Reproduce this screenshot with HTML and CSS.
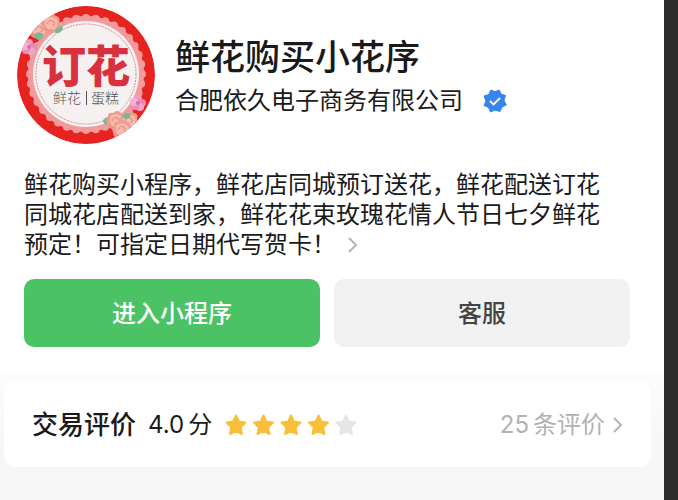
FILE: index.html
```html
<!DOCTYPE html>
<html lang="zh-CN">
<head>
    <meta charset="UTF-8">
    <meta name="viewport" content="width=device-width, initial-scale=1.0">
    <title>鲜花购买小花序</title>
    <link rel="stylesheet" href="styles.css">
</head>
<body>
    <main class="page">
        <section class="profile">
            <header class="header">
                <svg class="logo" viewBox="0 0 138 138" role="img" aria-label="订花 鲜花蛋糕">
                    <defs>
                        <clipPath id="logo-clip"><circle cx="69" cy="69" r="69"/></clipPath>
                        <g id="rose">
                            <path d="M-8-3Q-9-9-3-8Q1-12 5-8Q10-7 8-2Q11 3 7 6Q3 11-2 8Q-9 8-9 2Q-11-1-8-3Z" fill="#ef9d92"/>
                            <path d="M-6-4Q-2-9 3-6Q8-4 6 1Q5 7-1 6Q-7 5-6-4Z" fill="#f6b9ab"/>
                            <path d="M-4 0Q-2-5 2-3Q5-1 2 2M-7 4Q-3 8 2 6" fill="none" stroke="#e3837c" stroke-width="1"/>
                        </g>
                        <g id="blossom">
                            <circle cx="0" cy="-4" r="4" fill="#ee9cc5"/>
                            <circle cx="4" cy="0" r="4" fill="#ea86b8"/>
                            <circle cx="2" cy="4" r="4" fill="#f0a5ca"/>
                            <circle cx="-3" cy="3" r="4" fill="#e88fc0"/>
                            <circle cx="-4" cy="-1" r="4" fill="#f2b2d2"/>
                            <circle r="2" fill="#dc6ca6"/>
                        </g>
                    </defs>
                    <g clip-path="url(#logo-clip)">
                        <circle cx="69" cy="69" r="69" fill="#e6231f"/>
                        <circle cx="69" cy="68" r="58" fill="#f29a9c"/>
                        <circle class="scallops" cx="69" cy="68" r="56" pathLength="360"/>
                        <circle cx="69" cy="68" r="53" fill="#f4f1f0"/>
                        <circle class="stitches" cx="69" cy="68" r="50"/>
                        <use href="#rose" x="22" y="24"/>
                        <use href="#rose" x="34" y="18"/>
                        <use href="#blossom" x="12" y="41"/>
                        <path d="M17 29Q21 24 26 28Q26 34 21 34Q18 33 17 29M38 27Q38 20 46 20Q46 28 38 27" fill="#79b892"/>
                        <path d="M86 114Q90 109 96 112Q96 119 90 119Q86 118 86 114" fill="#79b892"/>
                        <use href="#rose" x="99" y="115"/>
                        <use href="#rose" x="112" y="115"/>
                        <use href="#rose" x="105" y="124"/>
                        <path d="M105 110Q108 105 114 108Q113 113 108 113M114 124Q121 119 124 124Q119 130 114 124" fill="#79b892"/>
                        <use href="#blossom" x="121" y="97"/>
                    </g>
                    <text class="logo-name" x="69" y="77">订花</text>
                    <text class="logo-sub" x="50" y="97">鲜花</text>
                    <path d="M69.500 85V99" stroke="#555" stroke-width="1"/>
                    <text class="logo-sub" x="88" y="97">蛋糕</text>
                </svg>
                <div class="titles">
                    <h1>鲜花购买小花序</h1>
                    <p class="company">
                        <span>合肥依久电子商务有限公司</span>
                        <svg class="verified" viewBox="0 0 24 24" role="img" aria-label="已认证">
                            <path d="M7.800 1L12 2.800L16.200 1L18 5L22.500 6.500L21 11.500L23.300 16L19 18L17 22.500L12 21L7.500 23L5.500 18.500L1 16.500L3 12L1 7L5.800 5.500Z" fill="#3485ee" stroke="#3485ee" stroke-linejoin="round"/>
                            <path d="M7 12L10.500 15.500L17 9" fill="none" stroke="#fff" stroke-width="1.800"/>
                        </svg>
                    </p>
                </div>
            </header>

            <p class="description">
                鲜花购买小程序，鲜花店同城预订送花，鲜花配送订花<br>
                同城花店配送到家，鲜花花束玫瑰花情人节日七夕鲜花<br>
                预定！可指定日期代写贺卡！<a class="more" href="#" aria-label="查看更多"><svg class="chevron" viewBox="0 0 10 16"><path d="M1 1L8 8L1 15"/></svg></a>
            </p>

            <div class="actions">
                <button class="btn primary" type="button">进入小程序</button>
                <button class="btn" type="button">客服</button>
            </div>
        </section>

        <section class="reviews">
            <div class="card">
                <h2>交易评价</h2>
                <span class="score">4.0<span class="unit">分</span></span>
                <svg class="stars" viewBox="0 0 134 24" role="img" aria-label="4 / 5">
                    <defs>
                        <path id="star" d="M12 2.500L14.900 8.600L21.500 9.500L16.700 14.200L17.900 21L12 17.800L6.100 21L7.300 14.200L2.500 9.500L9.100 8.600Z" stroke-width="2" stroke-linejoin="round"/>
                    </defs>
                    <use class="on" href="#star"/>
                    <use class="on" href="#star" x="27.500"/>
                    <use class="on" href="#star" x="55"/>
                    <use class="on" href="#star" x="82.500"/>
                    <use class="off" href="#star" x="110"/>
                </svg>
                <a class="count" href="#">
                    <span>25<span class="unit">条评价</span></span>
                    <svg class="chevron" viewBox="0 0 10 16"><path d="M1 1L8 8L1 15"/></svg>
                </a>
            </div>
        </section>
    </main>
</body>
</html>
```
FILE: styles.css
```css
* {
    box-sizing: border-box;
}

body {
    margin: 0;
    min-height: 100vh;
    display: flex;
    border-right: 14px solid #2c2c2c;
    background-color: #f6f6f6;
    color: #1a1a1a;
    font-family: Inter, "Noto Sans CJK SC", sans-serif;
    font-size: 24px;
}

h1,
h2,
p {
    margin: 0;
}

a {
    color: inherit;
    text-decoration: none;
}

.page {
    flex: 1;
    min-width: 0;
}

/* Top part: logo, names, description, buttons */
.profile {
    padding: 6px 34px 25px 24px;
    background-color: #fff;
}

.header {
    display: flex;
    align-items: center;
    gap: 20px;
    margin-left: -7px;
}

.logo {
    flex: none;
    width: 138px;
    height: 138px;
}

.scallops {
    fill: none;
    stroke: #f29a9c;
    stroke-width: 8;
    stroke-linecap: round;
    stroke-dasharray: 0 10;
}

.stitches {
    fill: none;
    stroke: #d88a90;
    stroke-width: 1;
    stroke-dasharray: 2 1;
}

.logo-name {
    fill: #d9303e;
    font-size: 44px;
    font-weight: 900;
    text-anchor: middle;
}

.logo-sub {
    fill: #555;
    font-size: 14px;
    font-weight: 300;
    text-anchor: middle;
}

.titles {
    display: flex;
    flex-direction: column;
    gap: 4px;
    padding-top: 3px;
}

h1 {
    font-size: 35px;
    font-weight: 500;
    line-height: 44px;
}

.company {
    display: flex;
    align-items: center;
    gap: 20px;
    line-height: 36px;
}

.verified {
    width: 24px;
    height: 24px;
}

.description {
    margin-top: 26px;
    line-height: 30px;
}

.chevron {
    width: 10px;
    height: 16px;
    fill: none;
    stroke: #b5b5b5;
    stroke-width: 2;
}

.more {
    margin-left: 12px;
}

.actions {
    display: grid;
    grid-template-columns: 1fr 1fr;
    gap: 14px;
    margin-top: 19px;
}

.btn {
    padding: 17px 16px 15px;
    border: none;
    border-radius: 10px;
    background-color: #f1f1f1;
    color: #444;
    font-family: inherit;
    font-size: 24px;
    font-weight: 500;
    line-height: 36px;
    cursor: pointer;
}

.btn.primary {
    background-color: #4bc365;
    color: #fff;
}

/* Rating card */
.reviews {
    padding: 9px 13px 32px 4px;
    background: linear-gradient(#fcfcfc, #f6f6f6 80px);
}

.card {
    display: flex;
    align-items: center;
    padding: 26px 28px 24px;
    border-radius: 12px;
    background-color: #fff;
    line-height: 36px;
}

h2 {
    font-size: 26px;
    font-weight: 500;
}

.score {
    margin-left: 12px;
}

.unit {
    margin-left: 4px;
}

.stars {
    width: 134px;
    height: 24px;
    margin-left: 12px;
}

.on {
    fill: #f8c03a;
    stroke: #f8c03a;
}

.off {
    fill: #e6e6e6;
    stroke: #e6e6e6;
}

.count {
    display: flex;
    align-items: center;
    gap: 8px;
    margin-left: auto;
    color: #b2b2b2;
}
```
